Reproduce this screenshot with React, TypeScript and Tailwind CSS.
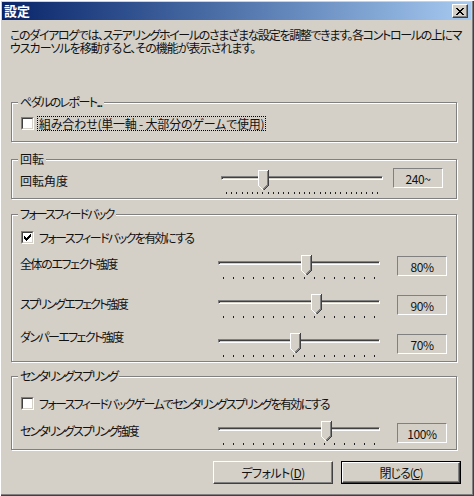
import React from "react"

function Checkbox({ checked }: { checked?: boolean }) {
  return (
    <span className="block w-[13px] h-[13px] shrink-0 border border-t-[#808080] border-l-[#808080] border-b-white border-r-white">
      <span className="block w-full h-full bg-white border border-t-[#404040] border-l-[#404040] border-b-[#d4d0c8] border-r-[#d4d0c8]">
        {checked && (
          <svg width="9" height="9" viewBox="0 0 9 9" shapeRendering="crispEdges">
            <path
              d="M1 3h1v3h-1z M2 4h1v3h-1z M3 5h1v3h-1z M4 4h1v3h-1z M5 3h1v3h-1z M6 2h1v3h-1z M7 1h1v3h-1z"
              fill="#000"
            />
          </svg>
        )}
      </span>
    </span>
  )
}

function Thumb({ left }: { left: number }) {
  return (
    <svg
      className="absolute top-0"
      style={{ left }}
      width="11"
      height="21"
      viewBox="0 0 11 21"
      shapeRendering="crispEdges"
    >
      <path d="M0 0H11V15L5.5 20.5L0 15Z" fill="#d4d0c8" />
      <path d="M0.5 15V0.5H9.5" stroke="#fff" fill="none" />
      <path d="M0.5 15.5L5 20" stroke="#fff" fill="none" />
      <path d="M9.5 1V15L5 19.5" stroke="#808080" fill="none" />
      <path d="M10.5 0V15.5L5.5 20.5" stroke="#404040" fill="none" />
    </svg>
  )
}

function Slider({ f, ticks }: { f: number; ticks: number }) {
  return (
    <div className="relative w-[162px] h-[24px] shrink-0">
      <div className="mt-[6px] h-[4px] border border-t-[#808080] border-l-[#808080] border-b-white border-r-white shadow-[inset_1px_1px_0_#404040]" />
      <div className="mt-[12px] flex justify-between px-[5px]">
        {Array.from({ length: ticks }).map((_, i) => (
          <span key={i} className="block w-[1px] h-[2px] bg-[#202020]" />
        ))}
      </div>
      <Thumb left={Math.round(f * 152) + 1} />
    </div>
  )
}

function ValueBox({ value, className }: { value: string; className: string }) {
  return (
    <div
      className={`w-[50px] h-[20px] shrink-0 flex items-center justify-center border border-t-[#808080] border-l-[#808080] border-b-white border-r-white tracking-[-0.4px] ${className}`}
    >
      {value}
    </div>
  )
}

function Group({
  title,
  className,
  children,
}: {
  title: React.ReactNode
  className: string
  children: React.ReactNode
}) {
  return (
    <div
      className={`relative w-[446px] shrink-0 border border-[#808080] shadow-[inset_1px_1px_0_#fff,1px_1px_0_#fff] ${className}`}
    >
      <span className="absolute -top-[8px] left-[6px] px-[2px] bg-[#d4d0c8] whitespace-nowrap">{title}</span>
      {children}
    </div>
  )
}

function EffectRow({
  label,
  value,
  f,
  className,
  labelClass,
  boxClass,
}: {
  label: string
  value: string
  f: number
  className: string
  labelClass: string
  boxClass: string
}) {
  return (
    <div className={`flex items-start ${className}`}>
      <div className={`w-[198px] shrink-0 whitespace-nowrap ${labelClass}`}>{label}</div>
      <Slider f={f} ticks={16} />
      <ValueBox value={value} className={`ml-[17px] ${boxClass}`} />
    </div>
  )
}

function Button({ children, isDefault }: { children: React.ReactNode; isDefault?: boolean }) {
  if (isDefault) {
    return (
      <div className="w-[120px] h-[23px] border border-black">
        <div className="w-full h-full flex items-center justify-center border border-t-white border-l-white border-b-[#404040] border-r-[#404040] shadow-[inset_-1px_-1px_0_#808080] tracking-[-1px]">
          {children}
        </div>
      </div>
    )
  }
  return (
    <div className="w-[120px] h-[23px] flex items-center justify-center border border-t-white border-l-white border-b-[#404040] border-r-[#404040] shadow-[inset_-1px_-1px_0_#808080] tracking-[-0.5px]">
      {children}
    </div>
  )
}

export default function App() {
  return (
    <div className="w-[474px] h-[496px] overflow-hidden bg-[#d4d0c8] flex flex-col pt-[2px] pl-[2px] pr-[3px] pb-[3px] shadow-[inset_1px_1px_0_#fff,inset_-1px_-1px_0_#404040,inset_-2px_-2px_0_#808080] text-[#111] text-[12px] leading-[13px] font-['Noto_Sans_CJK_JP','Noto_Sans',sans-serif] [font-feature-settings:'palt']">
      {/* title bar */}
      <div className="h-[18px] shrink-0 flex items-center justify-between pl-[2px] pr-[3px] bg-linear-to-r from-[#0a246a] to-[#a6caf0]">
        <span className="text-white font-bold text-[13px] leading-[16px]">設定</span>
        <div className="w-[16px] h-[14px] flex items-center justify-center bg-[#d4d0c8] border border-t-white border-l-white border-b-[#404040] border-r-[#404040] shadow-[inset_-1px_-1px_0_#808080]">
          <svg width="8" height="7" viewBox="0 0 8 7" shapeRendering="crispEdges">
            <path
              d="M0 0h2v1h-2z M6 0h2v1h-2z M1 1h2v1h-2z M5 1h2v1h-2z M2 2h4v1h-4z M3 3h2v1h-2z M2 4h4v1h-4z M1 5h2v1h-2z M5 5h2v1h-2z M0 6h2v1h-2z M6 6h2v1h-2z"
              fill="#000"
            />
          </svg>
        </div>
      </div>

      <div className="flex flex-col pl-[9px] pr-[13px]">
        <p className="mt-[8px] -ml-[1px] whitespace-nowrap leading-[13px]">
          <span className="block tracking-[-1.35px]">
            このダイアログでは、ステアリングホイールのさまざまな設定を調整できます。各コントロールの上にマ
          </span>
          <span className="block tracking-[-1px]">ウスカーソルを移動すると、その機能が表示されます。</span>
        </p>

        <Group
          title={<span className="tracking-[-1.6px]">ペダルのレポート...</span>}
          className="mt-[48px] h-[40px] pt-[13px] pl-[9px]"
        >
          <div className="flex items-center">
            <Checkbox />
            <span className="ml-[3px] px-[1px] border border-dotted border-black whitespace-nowrap tracking-[-0.2px]">
              組み合わせ(単一軸 - 大部分のゲームで使用)
            </span>
          </div>
        </Group>

        <Group title="回転" className="mt-[17px] h-[40px] pt-[10px] pl-[8px]">
          <div className="flex items-start">
            <div className="w-[201px] shrink-0 mt-[4px]">回転角度</div>
            <Slider f={0.24} ticks={30} />
            <ValueBox value="240~" className="ml-[10px] -mt-[2px]" />
          </div>
        </Group>

        <Group
          title={<span className="tracking-[-1.8px]">フォースフィードバック</span>}
          className="mt-[15px] h-[148px] pt-[16px] pl-[8px]"
        >
          <div className="flex items-center ml-[1px]">
            <Checkbox checked />
            <span className="ml-[5px] whitespace-nowrap tracking-[-1.6px]">フォースフィードバックを有効にする</span>
          </div>
          <div className="tracking-[-1.4px]">
            <EffectRow
              label="全体のエフェクト強度"
              value="80%"
              f={0.54}
              className="mt-[11px]"
              labelClass="mt-[2px]"
              boxClass="mt-[1px] tracking-[-0.4px]"
            />
          </div>
          <div className="tracking-[-1.8px]">
            <EffectRow
              label="スプリングエフェクト強度"
              value="90%"
              f={0.605}
              className="mt-[15px]"
              labelClass="mt-[3px]"
              boxClass="mt-[1px] tracking-[-0.4px]"
            />
          </div>
          <div className="tracking-[-1.6px]">
            <EffectRow
              label="ダンパーエフェクト強度"
              value="70%"
              f={0.47}
              className="mt-[15px]"
              labelClass="-mt-[3px]"
              boxClass="mt-[1px] tracking-[-0.4px]"
            />
          </div>
        </Group>

        <Group
          title={<span className="tracking-[-1.8px]">センタリングスプリング</span>}
          className="mt-[14px] h-[74px] pt-[20px] pl-[8px]"
        >
          <div className="flex items-center ml-[1px]">
            <Checkbox />
            <span className="ml-[5px] whitespace-nowrap tracking-[-1.7px]">
              フォースフィードバックゲームでセンタリングスプリングを有効にする
            </span>
          </div>
          <div className="tracking-[-1.8px]">
            <EffectRow
              label="センタリングスプリング強度"
              value="100%"
              f={0.67}
              className="mt-[11px]"
              labelClass="mt-[3px]"
              boxClass="mt-[2px] tracking-[-0.4px]"
            />
          </div>
        </Group>

        <div className="mt-[11px] -mr-[3px] flex justify-end gap-[8px]">
          <Button>
            デフォルト(<span className="underline">D</span>)
          </Button>
          <Button isDefault>
            閉じる(<span className="underline">C</span>)
          </Button>
        </div>
      </div>
    </div>
  )
}
